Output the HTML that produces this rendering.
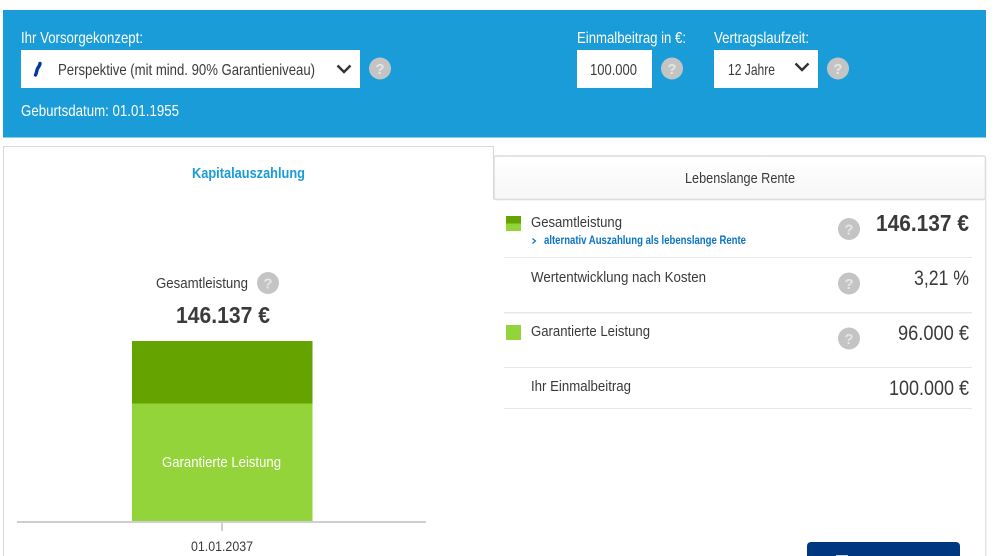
<!DOCTYPE html>
<html lang="de">
<head>
<meta charset="utf-8">
<title>Vorsorgekonzept</title>
<style>
html,body{margin:0;padding:0;background:#fff;width:1000px;height:556px;overflow:hidden}
svg{display:block;filter:blur(.3px)}
text{font-family:"Liberation Sans",sans-serif;fill:#3a3a3a;font-size:16px}
.w{fill:#fff}
.q{fill:#e6e6e6;font-size:15px;font-weight:bold;text-anchor:middle}
.b{font-weight:bold}
</style>
</head>
<body>
<svg width="1000" height="556" viewBox="0 0 1000 556" xmlns="http://www.w3.org/2000/svg">
<defs>
<linearGradient id="tab" x1="0" y1="0" x2="0" y2="1"><stop offset="0" stop-color="#fff"/><stop offset="1" stop-color="#f7f7f7"/></linearGradient>
</defs>
<rect width="1000" height="556" fill="#fff"/>

<!-- blue header -->
<rect x="3" y="10" width="983" height="127.500" fill="#1a9cd8"/>
<text class="w" x="21" y="43" textLength="122" lengthAdjust="spacingAndGlyphs">Ihr Vorsorgekonzept:</text>
<rect x="21" y="50" width="339" height="38" fill="#fff"/>
<path d="M40 63.500 C40 66 37.500 67.500 37 70 C36.500 72 36.500 73.500 35.500 75" fill="none" stroke="#003a9b" stroke-width="3.400" stroke-linecap="round"/>
<text x="58" y="75" textLength="257" lengthAdjust="spacingAndGlyphs">Perspektive (mit mind. 90% Garantieniveau)</text>
<path d="M337.500 65.500 L344 72 L350.500 65.500" fill="none" stroke="#333" stroke-width="2.400"/>
<circle cx="380" cy="68.500" r="11" fill="#c4c4c4"/><text class="q" x="380" y="74">?</text>
<text class="w" x="21" y="116" textLength="158" lengthAdjust="spacingAndGlyphs">Geburtsdatum: 01.01.1955</text>

<text class="w" x="577" y="43" textLength="109" lengthAdjust="spacingAndGlyphs">Einmalbeitrag in €:</text>
<rect x="577" y="50" width="75" height="38" fill="#fff"/>
<text x="590" y="75" textLength="47" lengthAdjust="spacingAndGlyphs">100.000</text>
<circle cx="672" cy="68.500" r="11" fill="#c4c4c4"/><text class="q" x="672" y="74">?</text>

<text class="w" x="714" y="43" textLength="95" lengthAdjust="spacingAndGlyphs">Vertragslaufzeit:</text>
<rect x="714" y="50" width="104" height="38" fill="#fff"/>
<text x="728" y="75" textLength="47" lengthAdjust="spacingAndGlyphs">12 Jahre</text>
<path d="M795.500 63.500 L802 70 L808.500 63.500" fill="none" stroke="#333" stroke-width="2.400"/>
<circle cx="838" cy="68.500" r="11" fill="#c4c4c4"/><text class="q" x="838" y="74">?</text>

<!-- right panel and tab -->
<rect x="494" y="156" width="491.500" height="43.500" rx="2" fill="url(#tab)" stroke="#dcdcdc" stroke-width="1.500"/>
<text x="685" y="183" textLength="110" lengthAdjust="spacingAndGlyphs" style="font-size:15px">Lebenslange Rente</text>
<rect x="985" y="199" width="1.500" height="357" fill="#e4e4e4"/>

<!-- left tab -->
<path d="M3.500 556 V146.500 H493.500 V199.500" fill="#fff" stroke="#d8d8d8"/>
<rect x="4" y="147" width="489" height="409" fill="#fff"/>
<text x="192" y="178" textLength="113" lengthAdjust="spacingAndGlyphs" class="b" style="fill:#1a9cd8;font-size:15px">Kapitalauszahlung</text>

<!-- chart -->
<text x="156" y="288" textLength="92" lengthAdjust="spacingAndGlyphs" style="font-size:15px">Gesamtleistung</text>
<circle cx="268" cy="283" r="11" fill="#c4c4c4"/><text class="q" x="268" y="288.500">?</text>
<text x="176" y="323" textLength="94" lengthAdjust="spacingAndGlyphs" class="b" style="font-size:23px">146.137 €</text>
<rect x="132" y="341" width="180.500" height="62.500" fill="#65a300"/>
<rect x="132" y="403.500" width="180.500" height="118" fill="#92d43a"/>
<text class="w" x="162" y="467" textLength="119" lengthAdjust="spacingAndGlyphs" style="font-size:15px">Garantierte Leistung</text>
<rect x="17" y="521" width="409" height="2" fill="#cfcfcf"/>
<rect x="221" y="523" width="2" height="8" fill="#cfcfcf"/>
<text x="191" y="551" textLength="62" lengthAdjust="spacingAndGlyphs" style="font-size:14px">01.01.2037</text>

<!-- right rows -->
<rect x="506" y="216" width="15" height="7.500" fill="#65a300"/>
<rect x="506" y="223.500" width="15" height="7.500" fill="#92d43a"/>
<text x="531" y="227" textLength="91" lengthAdjust="spacingAndGlyphs" style="font-size:15px">Gesamtleistung</text>
<path d="M532.500 238.500 L535.500 241 L532.500 243.500" fill="none" stroke="#0a74c4" stroke-width="1.200"/>
<text x="544" y="244" textLength="202" lengthAdjust="spacingAndGlyphs" class="b" style="fill:#0a74c4;font-size:11.500px">alternativ Auszahlung als lebenslange Rente</text>
<circle cx="849" cy="229" r="11" fill="#c4c4c4"/><text class="q" x="849" y="234.500">?</text>
<text x="876" y="231" textLength="93" lengthAdjust="spacingAndGlyphs" class="b" style="font-size:23px">146.137 €</text>
<rect x="504" y="257" width="468" height="1" fill="#e8e8e8"/>

<text x="531" y="282" textLength="175" lengthAdjust="spacingAndGlyphs" style="font-size:15px">Wertentwicklung nach Kosten</text>
<circle cx="849" cy="283.500" r="11" fill="#c4c4c4"/><text class="q" x="849" y="289">?</text>
<text x="914" y="285" textLength="55" lengthAdjust="spacingAndGlyphs" style="font-size:21px">3,21 %</text>
<rect x="504" y="312" width="468" height="1.500" fill="#e8e8e8"/>

<rect x="506" y="325" width="15" height="15" fill="#92d43a"/>
<text x="531" y="336" textLength="119" lengthAdjust="spacingAndGlyphs" style="font-size:15px">Garantierte Leistung</text>
<circle cx="849" cy="338.500" r="11" fill="#c4c4c4"/><text class="q" x="849" y="344">?</text>
<text x="898" y="340" textLength="71" lengthAdjust="spacingAndGlyphs" style="font-size:21px">96.000 €</text>
<rect x="504" y="367" width="468" height="1" fill="#e8e8e8"/>

<text x="531" y="391" textLength="100" lengthAdjust="spacingAndGlyphs" style="font-size:15px">Ihr Einmalbeitrag</text>
<text x="889" y="395" textLength="80" lengthAdjust="spacingAndGlyphs" style="font-size:21px">100.000 €</text>
<rect x="504" y="408" width="468" height="1" fill="#e8e8e8"/>

<!-- button -->
<path d="M807 556 V546 A4 4 0 0 1 811 542 H956 A4 4 0 0 1 960 546 V556Z" fill="#003781"/>
<rect x="836" y="555" width="12" height="1" fill="#cfd8e8"/>
</svg>
</body>
</html>
